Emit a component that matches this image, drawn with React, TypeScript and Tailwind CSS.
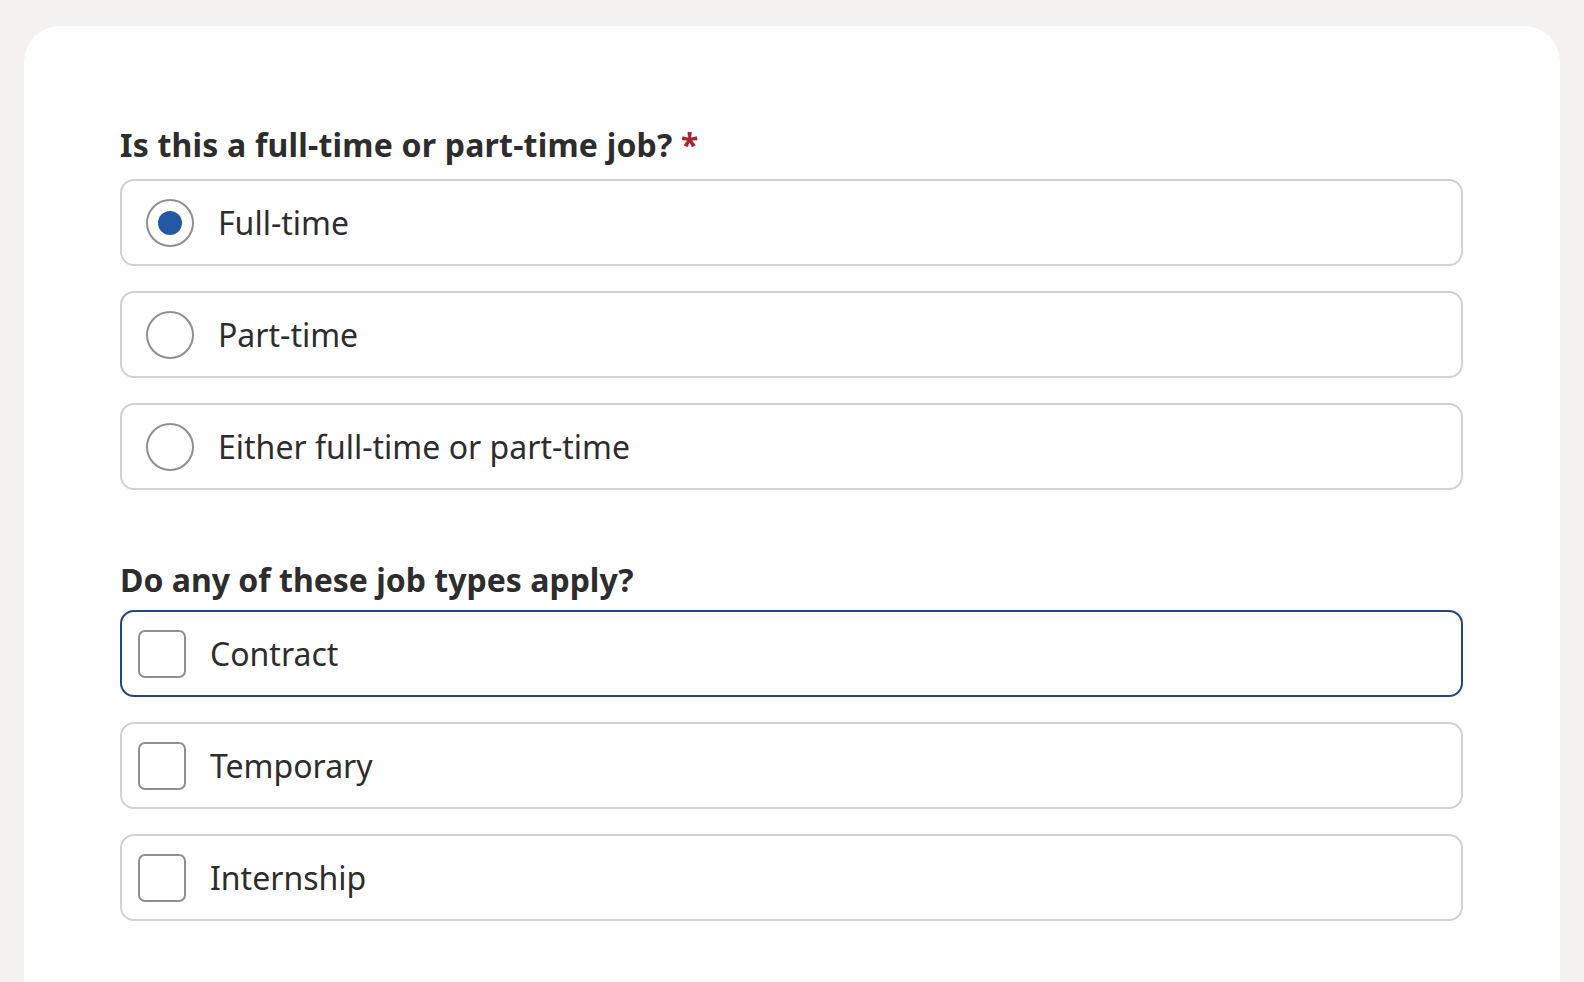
import React, { useState } from 'react';

const font = { fontFamily: '"Noto Sans", "Open Sans", sans-serif' };

const radioOptions = ['Full-time', 'Part-time', 'Either full-time or part-time'];
const checkOptions = ['Contract', 'Temporary', 'Internship'];

const Radio = ({ checked }: { checked: boolean }) => (
  <span className="w-12 h-12 shrink-0 rounded-full border-2 border-[#8f8f8f] bg-white flex items-center justify-center">
    {checked && <span className="w-6 h-6 rounded-full bg-[#2557a7]" />}
  </span>
);

const Checkbox = ({ checked }: { checked: boolean }) => (
  <span className="w-12 h-12 shrink-0 rounded-[7px] border-2 border-[#8f8f8f] bg-white" >
    {checked && <span className="block w-full h-full bg-[#2557a7]" />}
  </span>
);

export default function App() {
  const [jobTime, setJobTime] = useState('Full-time');
  const [types, setTypes] = useState<string[]>([]);
  const focused = 'Contract';

  const toggle = (t: string) =>
    setTypes((prev) => (prev.includes(t) ? prev.filter((x) => x !== t) : [...prev, t]));

  return (
    <div className="min-h-screen bg-[#f3f2f1] pt-[26px] pl-6 pr-6 overflow-hidden" style={font}>
      <div className="w-[1536px] h-[1000px] bg-white rounded-t-[36px] pl-[96px] pr-[97px] pt-[99px] text-[#2d2d2d]">
        {/* Full/part time */}
        <h2 className="text-[32px] leading-[40px] font-bold mb-[14px] tracking-[0.2px]">
          Is this a full-time or part-time job? <span className="text-[#a9252b]">*</span>
        </h2>
        <div className="flex flex-col gap-[25px]">
          {radioOptions.map((opt) => (
            <button
              key={opt}
              onClick={() => setJobTime(opt)}
              className="h-[87px] w-full flex items-center gap-6 pl-6 rounded-[14px] border-2 border-[#d4d2d0] bg-white text-left"
            >
              <Radio checked={jobTime === opt} />
              <span className="text-[32px] leading-none">{opt}</span>
            </button>
          ))}
        </div>

        {/* Job types */}
        <h2 className="text-[32px] leading-[40px] font-bold mt-[70px] mb-[10px]">
          Do any of these job types apply?
        </h2>
        <div className="flex flex-col gap-[25px]">
          {checkOptions.map((opt) => (
            <button
              key={opt}
              onClick={() => toggle(opt)}
              className={`h-[87px] w-full flex items-center gap-6 pl-4 rounded-[14px] border-2 bg-white text-left ${
                opt === focused ? 'border-[#1f4784]' : 'border-[#d4d2d0]'
              }`}
            >
              <Checkbox checked={types.includes(opt)} />
              <span className="text-[32px] leading-none">{opt}</span>
            </button>
          ))}
        </div>
      </div>
    </div>
  );
}
